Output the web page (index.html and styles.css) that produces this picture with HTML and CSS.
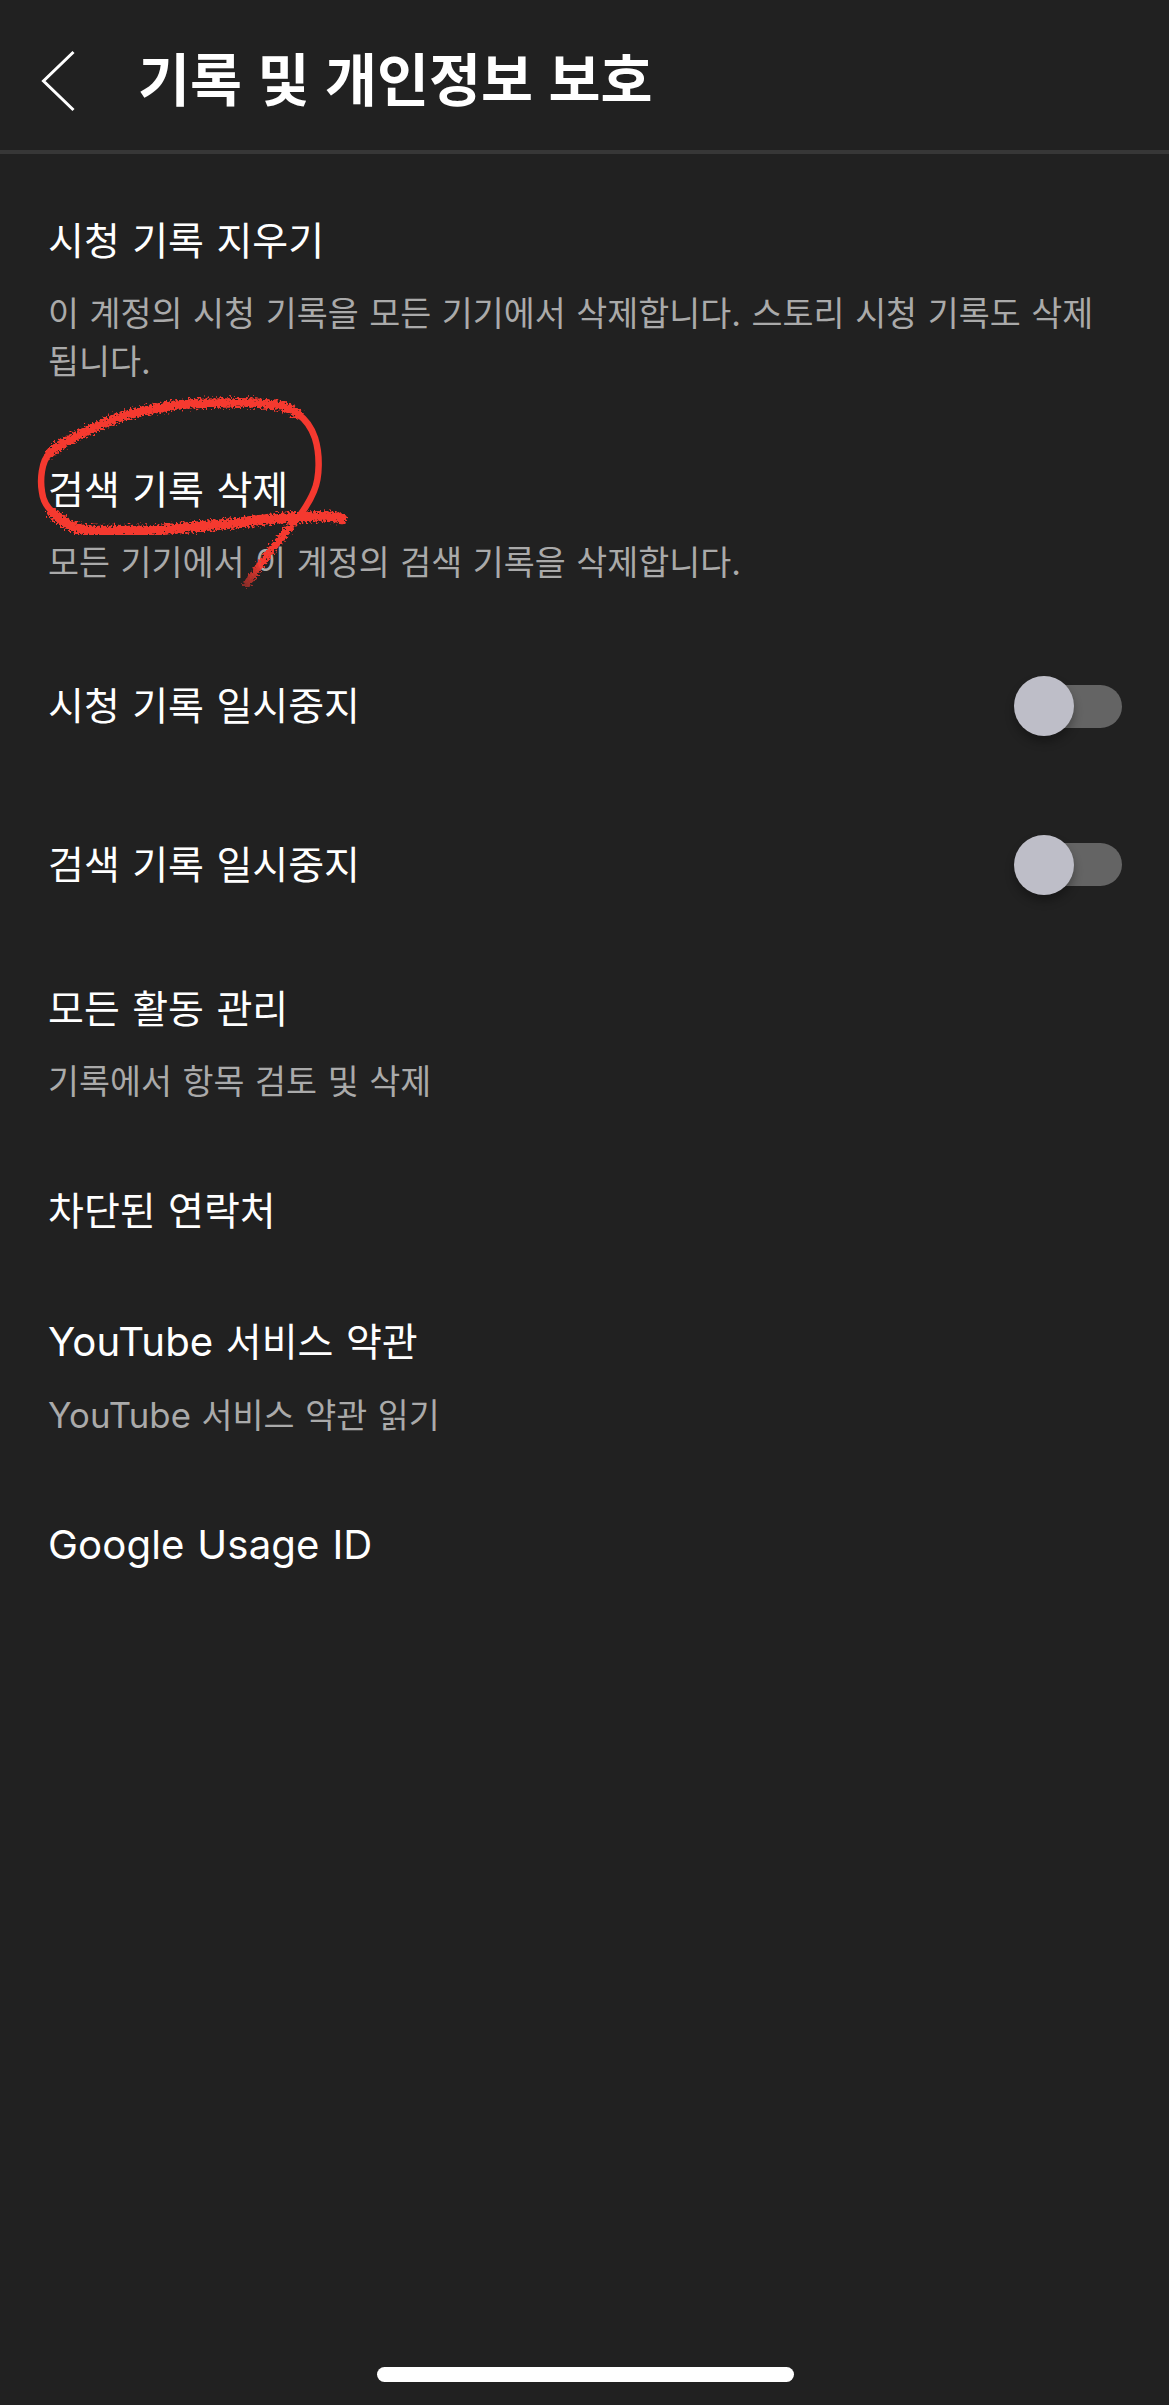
FILE: index.html
```html
<!DOCTYPE html>
<html lang="ko">
<head>
<meta charset="utf-8">
<title>기록 및 개인정보 보호</title>
<link rel="stylesheet" href="styles.css">
</head>
<body>
<div class="screen">
  <header class="header">
    <svg class="back" viewBox="0 0 36 64" width="36" height="64"><path d="M33.5 3 3.5 32 33.5 61"/></svg>
    <h1 class="header-title">기록 및 개인정보 보호</h1>
  </header>
  <main class="list">
    <section class="row row-first">
      <h2 class="title">시청 기록 지우기</h2>
      <p class="desc">이 계정의 시청 기록을 모든 기기에서 삭제합니다. 스토리 시청 기록도 삭제<br>됩니다.</p>
    </section>
    <section class="row">
      <h2 class="title">검색 기록 삭제</h2>
      <p class="desc">모든 기기에서 이 계정의 검색 기록을 삭제합니다.</p>
      <svg class="scribble" viewBox="20 380 360 220" width="360" height="220">
        <defs>
          <filter id="crayon" x="-10%" y="-20%" width="120%" height="140%" color-interpolation-filters="sRGB">
            <feTurbulence type="fractalNoise" baseFrequency="0.5" numOctaves="2" seed="4" result="n"/>
            <feDisplacementMap in="SourceGraphic" in2="n" scale="11" xChannelSelector="R" yChannelSelector="G"/>
          </filter>
          <linearGradient id="tail" gradientUnits="userSpaceOnUse" x1="246" y1="585" x2="262" y2="562">
            <stop offset="0" stop-color="#f5392f" stop-opacity=".5"/>
            <stop offset="1" stop-color="#f5392f"/>
          </linearGradient>
        </defs>
        <g fill="none" stroke="#f5392f" stroke-linecap="round" stroke-linejoin="round">
          <path stroke="url(#tail)" stroke-width="7.5" filter="url(#crayon)" d="M247 583C256 570 264 558 272 548C281 537 289 527 298 517"/>
          <path stroke-width="6.5" d="M298 517C304 509 310 500 314 490C320 476 320 453 315 437C311 425 305 418 298 413"/>
          <path stroke-width="9.5" filter="url(#crayon)" d="M298 413C289 406 279 403 266 403C252 401 234 402 220 402C203 402 187 402 170 405C157 407 143 410 130 413C115 417 100 424 87 430C72 437 58 444 50 452"/>
          <path stroke-width="6.5" d="M50 452C41 460 40 480 42 491C43 500 48 508 56 514"/>
          <path stroke-width="10.5" filter="url(#crayon)" d="M52 511C61 520 69 525 79 528C92 531 106 530 120 530C136 530 153 530 170 528C193 526 215 524 237 522C259 519 281 516 303 516C313 515 324 515 333 516C338 516 340 517 342 518"/>
        </g>
      </svg>
    </section>
    <section class="row row-switch">
      <h2 class="title">시청 기록 일시중지</h2>
      <span class="switch"><span class="knob"></span></span>
    </section>
    <section class="row row-switch">
      <h2 class="title">검색 기록 일시중지</h2>
      <span class="switch"><span class="knob"></span></span>
    </section>
    <section class="row">
      <h2 class="title">모든 활동 관리</h2>
      <p class="desc">기록에서 항목 검토 및 삭제</p>
    </section>
    <section class="row">
      <h2 class="title">차단된 연락처</h2>
    </section>
    <section class="row">
      <h2 class="title"><span class="latin">YouTube</span> 서비스 약관</h2>
      <p class="desc"><span class="latin">YouTube</span> 서비스 약관 읽기</p>
    </section>
    <section class="row">
      <h2 class="title"><span class="latin">Google Usage ID</span></h2>
    </section>
  </main>
  <div class="home-indicator"></div>
</div>
</body>
</html>
```
FILE: styles.css
```css
* { box-sizing: border-box; margin: 0; padding: 0; }

body {
  background: #212121;
  color: #fff;
  font-family: Inter, "Noto Sans CJK KR", sans-serif;
}

.screen {
  display: flex;
  flex-direction: column;
  height: 2405px;
  padding-bottom: 23px;
}

.header {
  display: flex;
  align-items: center;
  gap: 62px;
  height: 154px;
  padding: 11px 0 0 40px;
  border-bottom: 4px solid #373737;
}

.back { fill: none; stroke: #fff; stroke-width: 3; }

.header-title {
  font-size: 56.5px;
  font-weight: 700;
  line-height: 80px;
  word-spacing: 2.2px;
  white-space: nowrap;
}

.list { flex: 1; padding-top: 21px; }

.row {
  position: relative;
  padding: 40px 47px 41px 48px;
}

.title {
  font-size: 39px;
  font-weight: 400;
  line-height: 50px;
  word-spacing: 1.5px;
  white-space: nowrap;
}

.desc {
  margin-top: 24.4px;
  color: #aaa;
  font-size: 33.7px;
  line-height: 47px;
  word-spacing: 1.1px;
  white-space: nowrap;
}

.latin { font-size: 1.03em; letter-spacing: .1px; line-height: 1; }

.row-first { padding-top: 41px; padding-bottom: 38.2px; }
.row-first .desc { line-height: 48px; }

.row-switch {
  display: flex;
  align-items: center;
  justify-content: space-between;
  height: 158.5px;
  padding-top: 0;
  padding-bottom: 0;
}

.switch {
  display: flex;
  align-items: center;
  width: 105px;
  height: 43px;
  border-radius: 22px;
  background: #646464;
}

.knob {
  flex: none;
  width: 60px;
  height: 60px;
  margin-left: -3px;
  border-radius: 50%;
  background: #bebec8;
  box-shadow: 0 6px 10px rgba(0, 0, 0, .3);
}

/* Hand-drawn mark over the row */
.scribble {
  position: absolute;
  left: 20px;
  top: -44px;
}

.home-indicator {
  width: 417px;
  height: 15px;
  margin: 0 375px 0 377px;
  border-radius: 8px;
  background: #fff;
}
```
